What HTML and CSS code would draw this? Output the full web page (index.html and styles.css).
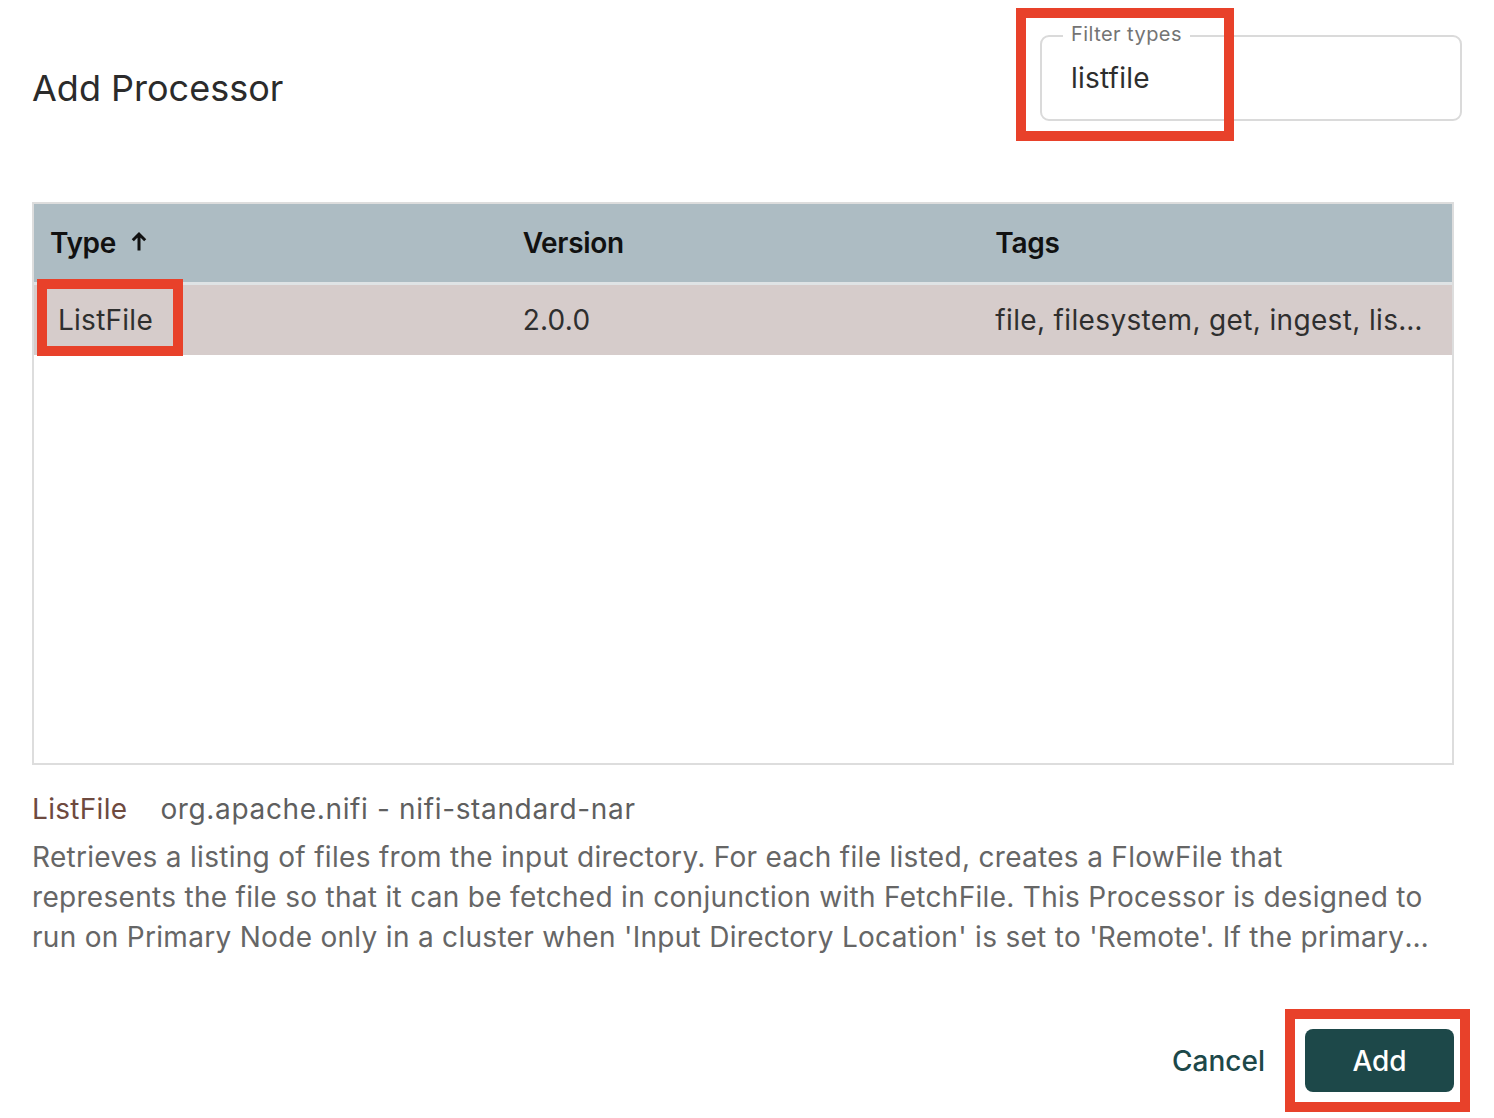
FILE: index.html
```html
<!DOCTYPE html>
<html lang="en">
<head>
<meta charset="utf-8">
<title>Add Processor</title>
<link rel="stylesheet" href="styles.css">
</head>
<body>
<div class="dialog">
  <header class="dialog-header">
    <h1 class="title">Add Processor</h1>
    <div class="filter-field">
      <span class="filter-label">Filter types</span>
      <span class="filter-value">listfile</span>
      <span class="mark mark-filter"></span>
    </div>
  </header>

  <div class="table">
    <div class="thead">
      <div class="th th-type">Type
        <svg class="sort-icon" viewBox="0 0 16 20" width="16" height="20" aria-hidden="true">
          <path d="M8 19.5V3M1.8 9.2L8 3L14.2 9.2" fill="none" stroke="#111" stroke-width="3" stroke-linecap="butt" stroke-linejoin="miter"/>
        </svg>
      </div>
      <div class="th">Version</div>
      <div class="th">Tags</div>
    </div>
    <div class="tr selected">
      <div class="td td-type">ListFile<span class="mark mark-cell"></span></div>
      <div class="td">2.0.0</div>
      <div class="td td-tags">file, filesystem, get, ingest, list, source, input, files</div>
    </div>
  </div>

  <section class="details">
    <div class="details-head"><span class="details-name">ListFile</span><span class="details-bundle">org.apache.nifi - nifi-standard-nar</span></div>
    <p class="details-desc">Retrieves a listing of files from the input directory. For each file listed, creates a FlowFile that represents the file so that it can be fetched in conjunction with FetchFile. This Processor is designed to run on Primary Node only in a cluster when 'Input Directory Location' is set to 'Remote'. If the primary node changes, the new Primary Node will pick up where the previous node left off without duplicating all the data.</p>
  </section>

  <footer class="actions">
    <button class="btn btn-text">Cancel</button>
    <button class="btn btn-primary">Add<span class="mark mark-add"></span></button>
  </footer>
</div>
</body>
</html>
```

FILE: styles.css
```css
html, body {
  margin: 0;
  padding: 0;
  background: #ffffff;
}
body {
  width: 1494px;
  height: 1118px;
  overflow: hidden;
  font-family: Inter, "Noto Sans", "Liberation Sans", sans-serif;
  color: #333333;
}
.dialog {
  padding: 0 40px 0 32px;
  display: flex;
  flex-direction: column;
}
.dialog-header {
  height: 202px;
  display: flex;
  justify-content: space-between;
  align-items: flex-start;
}
.title {
  margin: 66px 0 0 0;
  font-size: 36px;
  line-height: 44px;
  font-weight: 400;
  color: #2b2b2b;
  letter-spacing: 0;
}
.filter-field {
  position: relative;
  margin-top: 35px;
  margin-right: -8px;
  width: 422px;
  height: 86px;
  box-sizing: border-box;
  border: 2px solid #dadada;
  border-radius: 9px;
}
.filter-label {
  position: absolute;
  left: 21px;
  top: -16px;
  padding: 0 8px;
  background: #ffffff;
  font-size: 20px;
  line-height: 26px;
  letter-spacing: 0.45px;
  color: #747474;
}
.filter-value {
  position: absolute;
  left: 29px;
  top: 23px;
  font-size: 28px;
  line-height: 36px;
  letter-spacing: 0.2px;
  color: #2e2e2e;
}
.mark {
  position: absolute;
  box-sizing: border-box;
  border: 10px solid #e8412a;
  pointer-events: none;
}
.mark-filter {
  left: -26px;
  top: -29px;
  width: 218px;
  height: 133px;
}
.table {
  height: 563px;
  box-sizing: border-box;
  border: 2px solid #dddddd;
  display: flex;
  flex-direction: column;
}
.thead {
  height: 78px;
  background: #adbcc3;
  display: grid;
  grid-template-columns: 1fr 1fr 1fr;
  border-bottom: 3px solid #dfe3e5;
}
.th {
  display: flex;
  align-items: center;
  padding-left: 16px;
  font-size: 28px;
  font-weight: 600;
  color: #111111;
  letter-spacing: -0.3px;
}
.sort-icon {
  margin-left: 15px;
  margin-top: -4px;
}
.tr {
  height: 70px;
  display: grid;
  grid-template-columns: 1fr 1fr 1fr;
}
.tr.selected {
  background: #d6cccb;
}
.td {
  display: flex;
  align-items: center;
  padding-left: 16px;
  font-size: 28px;
  letter-spacing: 0.25px;
  color: #2f2f2f;
  min-width: 0;
}
.td-type {
  position: relative;
  padding-left: 24px;
}
.td-tags {
  display: block;
  line-height: 70px;
  padding-right: 24px;
  letter-spacing: 0.35px;
  white-space: nowrap;
  overflow: hidden;
  text-overflow: ellipsis;
}
.mark-cell {
  left: 3px;
  top: -6px;
  width: 146px;
  height: 77px;
}
.details {
  margin-top: 24px;
}
.details-head {
  font-size: 28px;
  line-height: 40px;
  display: flex;
  gap: 33px;
}
.details-name {
  color: #6e4a3f;
  letter-spacing: 0.3px;
}
.details-bundle {
  color: #5f5f5f;
  letter-spacing: 0.65px;
}
.details-desc {
  margin: 8px 0 0 0;
  max-width: 1398px;
  font-size: 28px;
  line-height: 40px;
  letter-spacing: 0.3px;
  color: #666666;
  display: -webkit-box;
  -webkit-line-clamp: 3;
  -webkit-box-orient: vertical;
  overflow: hidden;
}
.actions {
  margin-top: 72px;
  display: flex;
  justify-content: flex-end;
  align-items: center;
  gap: 40px;
}
.btn {
  font-family: Inter, "Noto Sans", "Liberation Sans", sans-serif;
  font-size: 28px;
  border: none;
  cursor: pointer;
}
.btn-text {
  background: transparent;
  color: #1d4849;
  padding: 0;
  font-weight: 500;
}
.btn-primary {
  position: relative;
  width: 149px;
  height: 63px;
  border-radius: 8px;
  background: #1d4849;
  color: #ffffff;
  font-weight: 500;
}
.mark-add {
  left: -20px;
  top: -20px;
  width: 185px;
  height: 103px;
}
```
